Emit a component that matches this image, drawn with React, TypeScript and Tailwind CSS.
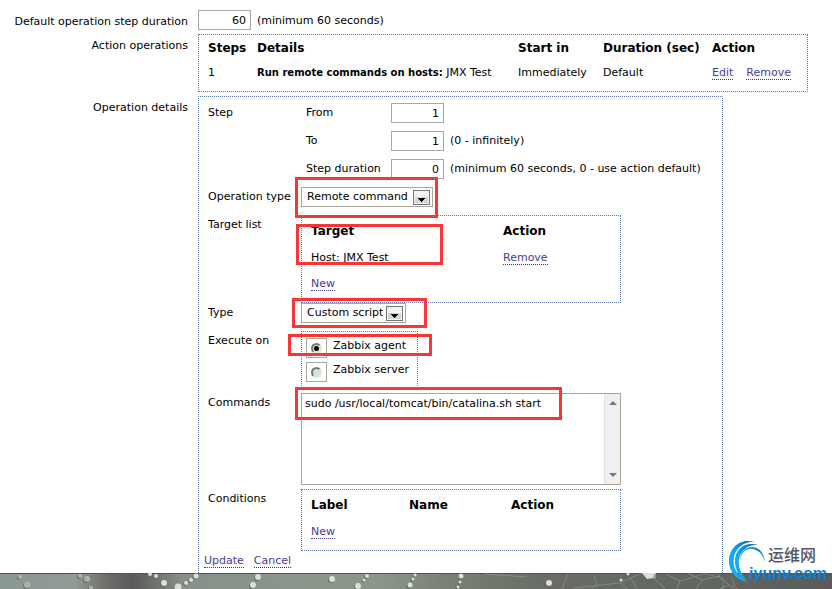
import React, { useState } from "react";

const boxClass = "border border-dotted border-[#5b77b5]";
const inputClass =
  "h-5 w-[53px] border border-[#a9a898] bg-white pr-1 text-right outline-none";

type LinkProps = { children: React.ReactNode; className?: string };

function ActionLink({ children, className = "" }: LinkProps) {
  return (
    <a
      href="#"
      className={`inline-block border-b border-dotted border-[#3d2f8f] leading-3 text-[#4a3c9c] ${className}`}
    >
      {children}
    </a>
  );
}

type RowProps = {
  label: string;
  htmlFor?: string;
  className?: string;
  children: React.ReactNode;
};

function FormRow({ label, htmlFor, className = "", children }: RowProps) {
  return (
    <div className={`flex items-start ${className}`}>
      <label htmlFor={htmlFor} className="w-[188px] shrink-0 text-right leading-6">
        {label}
      </label>
      <div className="ml-[10px] min-w-0 flex-1">{children}</div>
    </div>
  );
}

function DetailRow({ label, htmlFor, className = "", children }: RowProps) {
  return (
    <div className={`flex items-start ${className}`}>
      <label htmlFor={htmlFor} className="w-[93px] shrink-0 leading-5">
        {label}
      </label>
      <div className="relative min-w-0 flex-1">{children}</div>
    </div>
  );
}

function Highlight({ className }: { className: string }) {
  return (
    <div
      className={`pointer-events-none absolute z-10 border-3 border-[#f93636] ${className}`}
    />
  );
}

type SelectProps = { id: string; options: string[]; className: string };

function SelectBox({ id, options, className }: SelectProps) {
  return (
    <div className={`relative h-5 ${className}`}>
      <select
        id={id}
        className="block h-5 w-full appearance-none border border-[#a9a898] bg-white pl-[5px] outline-none"
      >
        {options.map((o) => (
          <option key={o}>{o}</option>
        ))}
      </select>
      <svg
        viewBox="0 0 17 15"
        className="pointer-events-none absolute top-[3px] right-[3px] h-[15px] w-[17px]"
      >
        <rect x="0.5" y="0.5" width="16" height="14" fill="#f3f3f3" stroke="#74777a" />
        <rect x="2" y="7" width="13" height="6" fill="#d4d5d7" />
        <path d="M5 8h7v1h-1v1h-1v1H9v1H8v-1H7v-1H6V9H5z" fill="#000" />
      </svg>
    </div>
  );
}

function StepFields() {
  const steps = [
    { id: "from", label: "From", value: "1", note: "" },
    { id: "to", label: "To", value: "1", note: "(0 - infinitely)" },
    {
      id: "duration",
      label: "Step duration",
      value: "0",
      note: "(minimum 60 seconds, 0 - use action default)",
    },
  ];

  return (
    <div className="flex flex-col gap-2 pl-[5px]">
      {steps.map((s) => (
        <div key={s.id} className="flex items-center whitespace-nowrap">
          <label htmlFor={s.id} className="w-[85px] shrink-0">
            {s.label}
          </label>
          <input id={s.id} defaultValue={s.value} className={inputClass} />
          <span className="ml-[6px]">{s.note}</span>
        </div>
      ))}
    </div>
  );
}

function ExecuteOn() {
  const [target, setTarget] = useState("Zabbix agent");

  return (
    <div className={`flex w-[117px] flex-col gap-1 pt-[6px] pb-[5px] pl-1 ${boxClass}`}>
      {["Zabbix agent", "Zabbix server"].map((name) => (
        <label key={name} className="flex h-5 items-start whitespace-nowrap">
          <span className="flex h-5 w-[21px] shrink-0 items-center justify-center border border-[#a9a898]">
            <input
              type="radio"
              name="execute_on"
              checked={target === name}
              onChange={() => setTarget(name)}
              className="size-[11px] appearance-none rounded-full border-2 border-t-[#777] border-r-[#e6e6e6] border-b-[#e6e6e6] border-l-[#777] bg-[#cde6cf] checked:bg-[radial-gradient(circle,#000_2px,#cde6cf_3px)]"
            />
          </span>
          <span className="ml-[6px] leading-4">{name}</span>
        </label>
      ))}
    </div>
  );
}

function CommandBox() {
  return (
    <div className="relative h-[92px] w-80">
      <textarea
        id="commands"
        defaultValue="sudo /usr/local/tomcat/bin/catalina.sh start"
        className="block h-full w-full resize-none overflow-hidden border border-[#a9a898] bg-white py-[2px] pr-5 pl-[3px] leading-4 outline-none"
      />
      <div className="absolute top-px right-px bottom-px flex w-4 flex-col items-center justify-between border-l border-[#e3e3e3] bg-[#f0f0f0] py-[7px]">
        <svg viewBox="0 0 8 4" className="h-1 w-2">
          <path d="M0 4L4 0L8 4z" fill="#777" />
        </svg>
        <svg viewBox="0 0 8 4" className="h-1 w-2">
          <path d="M0 0L4 4L8 0z" fill="#777" />
        </svg>
      </div>
    </div>
  );
}

function OperationsTable() {
  return (
    <div className={`mr-6 pb-[6px] ${boxClass}`}>
      <table className="w-full table-fixed text-left whitespace-nowrap">
        <thead className="text-[12px]">
          <tr className="h-[26px]">
            <th className="w-[58px] pl-[9px]">Steps</th>
            <th className="w-[261px]">Details</th>
            <th className="w-[85px]">Start in</th>
            <th className="w-[109px]">Duration (sec)</th>
            <th>Action</th>
          </tr>
        </thead>
        <tbody>
          <tr className="h-6">
            <td className="pl-[9px]">1</td>
            <td>
              <b className="text-[10px]">Run remote commands on hosts:</b> JMX Test
            </td>
            <td>Immediately</td>
            <td>Default</td>
            <td>
              <ActionLink>Edit</ActionLink>
              <ActionLink className="ml-[13px]">Remove</ActionLink>
            </td>
          </tr>
        </tbody>
      </table>
    </div>
  );
}

function TargetTable() {
  return (
    <div className={`w-80 pb-1 ${boxClass}`}>
      <table className="w-full table-fixed text-left">
        <thead className="text-[12px]">
          <tr className="h-[30px]">
            <th className="w-[201px] pl-[9px]">Target</th>
            <th>Action</th>
          </tr>
        </thead>
        <tbody>
          <tr className="h-6">
            <td className="pl-[9px]">Host: JMX Test</td>
            <td>
              <ActionLink>Remove</ActionLink>
            </td>
          </tr>
          <tr className="h-7">
            <td className="pl-[9px]" colSpan={2}>
              <ActionLink>New</ActionLink>
            </td>
          </tr>
        </tbody>
      </table>
    </div>
  );
}

function ConditionsTable() {
  return (
    <div className={`w-80 pb-[6px] ${boxClass}`}>
      <table className="w-full table-fixed text-left">
        <thead className="text-[12px]">
          <tr className="h-[30px]">
            <th className="w-[107px] pl-[9px]">Label</th>
            <th className="w-[102px]">Name</th>
            <th>Action</th>
          </tr>
        </thead>
        <tbody>
          <tr className="h-6">
            <td className="pl-[9px]" colSpan={3}>
              <ActionLink>New</ActionLink>
            </td>
          </tr>
        </tbody>
      </table>
    </div>
  );
}

// [x, y, radius] of each water drop on the web
const drops = [
  [20, 4, 2], [27, 12, 3], [80, 3, 2], [87, 6, 3], [91, 15, 2],
  [150, 1, 2], [156, 3, 2], [164, 10, 3], [178, 14, 3.5], [186, 10, 2],
  [191, 7, 2], [196, 3, 2.5], [253, 12, 3], [258, 4, 3], [332, 6, 3],
  [358, 13, 3], [364, 7, 1.5], [367, 3, 2], [410, 12, 2.5], [413, 6, 1.5],
  [415, 2, 1.5], [461, 3, 2.5], [460, 9, 1.5], [458, 14, 1.5], [549, 10, 3],
  [621, 7, 1.5], [628, 1, 1.5],
];

function Wallpaper() {
  return (
    <svg
      viewBox="0 0 832 16"
      preserveAspectRatio="xMidYMid slice"
      className="block h-4 w-full"
    >
      <defs>
        <linearGradient id="wall">
          <stop offset="0" stopColor="#8b9791" />
          <stop offset="0.09" stopColor="#909c95" />
          <stop offset="0.13" stopColor="#6b6c69" />
          <stop offset="0.16" stopColor="#5b5a59" />
          <stop offset="0.22" stopColor="#87918a" />
          <stop offset="0.45" stopColor="#8c978a" />
          <stop offset="0.55" stopColor="#777e72" />
          <stop offset="0.66" stopColor="#686c65" />
          <stop offset="0.85" stopColor="#626661" />
          <stop offset="1" stopColor="#5a5b59" />
        </linearGradient>
      </defs>
      <rect width="832" height="16" fill="url(#wall)" />
      <rect width="832" height="1" fill="#50534f" />
      <g fill="none" stroke="#b3b8ac" strokeWidth="0.7" opacity="0.55">
        <path d="M485 1L527 4M568 1L562 16M574 15L620 10L642 0" />
        <path d="M594 2L597 12L592 16M620 10L627 16M630 4L637 16M655 6L665 16" />
        <path d="M666 1L680 8L694 4L706 0M680 8L677 16M688 0L702 7L720 3M702 7L696 16" />
        <path d="M706 1L722 5L729 12L738 16M717 0L724 9L722 16M729 12L720 16M735 13L731 4" />
      </g>
      <path d="M642 0h14l-2 5-7 1z" fill="#dce1d5" />
      <path d="M654 1h2v4l-3 1z" fill="#8fa0a0" />
      {drops.map(([x, y, r]) => (
        <g key={`${x}-${y}`}>
          <circle cx={x - 1} cy={y + 1} r={r} fill="#50574f" opacity="0.6" />
          <circle cx={x} cy={y} r={r} fill="#e2e5dd" opacity={x < 100 ? 0.55 : 0.95} />
        </g>
      ))}
    </svg>
  );
}

function SiteBadge() {
  return (
    <div className="pointer-events-none absolute right-1 bottom-1 h-12 w-[100px]">
      <svg viewBox="0 0 100 48" className="absolute inset-0 h-full w-full">
        <defs>
          <linearGradient id="swirl" x1="0" y1="1" x2="1" y2="0">
            <stop offset="0" stopColor="#12b5f5" />
            <stop offset="0.5" stopColor="#19a3ea" />
            <stop offset="1" stopColor="#0a58a5" />
          </linearGradient>
        </defs>
        <g fill="url(#swirl)">
          <path d="M26 5C12 1 1 11 1 24C1 36 9 43 20 45C9 39 4 30 6 20C8 11 16 4 26 5z" />
          <path d="M30 8C17 4 7 12 7 24C7 33 11 40 19 44C13 37 10 30 11 22C13 13 20 7 30 8z" />
          <path d="M37 25C36 12 25 6 16 13C13 16 12 19 12 23C14 14 19 11 25 12C31 13 35 18 37 25z" />
        </g>
      </svg>
      <div className="relative flex flex-col items-end pt-[5px]">
        <span className="mr-3 font-['Noto_Sans_CJK_SC',sans-serif] text-[16px] leading-6 font-medium text-[#55556a]">
          运维网
        </span>
        <span className="mr-px font-['Liberation_Sans',Arial,sans-serif] text-[16px] leading-4 font-bold text-[#0a7fd8]">
          iyunv.com
        </span>
      </div>
    </div>
  );
}

export default function App() {
  return (
    <div className="relative overflow-hidden bg-white font-['DejaVu_Sans',Verdana,sans-serif] text-[11px] text-black">
      <form className="pt-[10px]">
        <FormRow label="Default operation step duration" htmlFor="esc_period">
          <input id="esc_period" defaultValue="60" className={inputClass} />
          <span className="ml-[6px]">(minimum 60 seconds)</span>
        </FormRow>

        <FormRow label="Action operations">
          <OperationsTable />
        </FormRow>

        <FormRow label="Operation details" className="mt-1">
          <div
            className={`w-[525px] max-w-full border-b-0 pt-[6px] pb-[2px] ${boxClass}`}
          >
            <div className="pl-[9px]">
              <DetailRow label="Step">
                <StepFields />
              </DetailRow>

              <DetailRow label="Operation type" htmlFor="optype" className="mt-2">
                <SelectBox
                  id="optype"
                  options={["Remote command", "Send message"]}
                  className="w-[132px]"
                />
                <Highlight className="-top-[10px] -left-[6px] h-[41px] w-[143px]" />
              </DetailRow>

              <DetailRow label="Target list" className="mt-2">
                <TargetTable />
                <Highlight className="top-[9px] -left-[5px] h-[41px] w-[147px]" />
              </DetailRow>

              <DetailRow label="Type" htmlFor="cmdtype">
                <SelectBox
                  id="cmdtype"
                  options={["Custom script", "IPMI", "SSH", "Telnet"]}
                  className="w-[105px]"
                />
                <Highlight className="-top-[5px] -left-[9px] h-[30px] w-[135px]" />
              </DetailRow>

              <DetailRow label="Execute on" className="mt-2">
                <ExecuteOn />
                <Highlight className="top-[3px] -left-[13px] h-[22px] w-[144px]" />
              </DetailRow>

              <DetailRow label="Commands" htmlFor="commands" className="mt-[5px]">
                <CommandBox />
                <Highlight className="-top-[6px] -left-[6px] h-[33px] w-[267px]" />
              </DetailRow>

              <DetailRow label="Conditions" className="mt-1">
                <ConditionsTable />
              </DetailRow>
            </div>

            <div className="flex h-5 items-center gap-[10px] pl-[5px]">
              <ActionLink>Update</ActionLink>
              <ActionLink>Cancel</ActionLink>
            </div>
          </div>
        </FormRow>
      </form>
      <Wallpaper />
      <SiteBadge />
    </div>
  );
}
